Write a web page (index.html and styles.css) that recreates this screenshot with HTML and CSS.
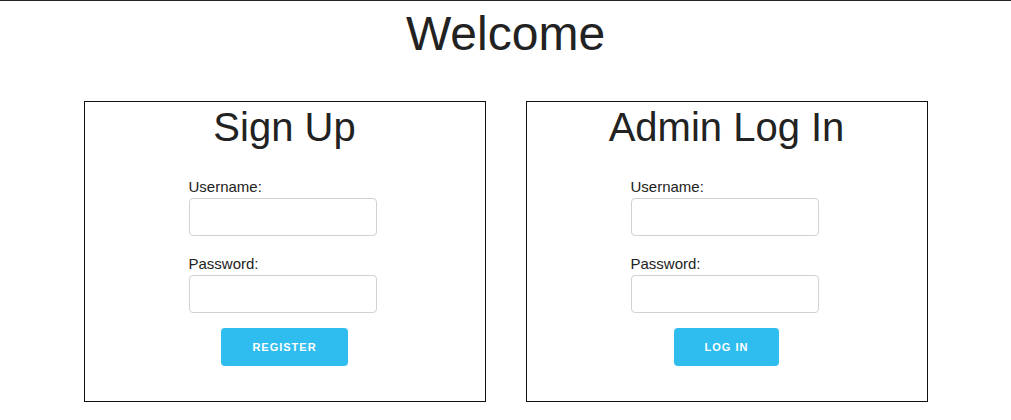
FILE: index.html
```html
<!DOCTYPE html>
<html lang="en">
<head>
<meta charset="utf-8">
<title>Welcome</title>
<link rel="stylesheet" href="styles.css">
</head>
<body>
<header class="topbar">
  <h1 class="title">Welcome</h1>
</header>
<main class="panels">
  <section class="panel">
    <h2 class="panel-title">Sign Up</h2>
    <form class="form">
      <label class="label" for="su-user">Username:</label>
      <input class="input" id="su-user" type="text">
      <label class="label" for="su-pass">Password:</label>
      <input class="input" id="su-pass" type="password">
    </form>
    <button class="btn" type="button">Register</button>
  </section>
  <section class="panel">
    <h2 class="panel-title">Admin Log In</h2>
    <form class="form">
      <label class="label" for="ad-user">Username:</label>
      <input class="input" id="ad-user" type="text">
      <label class="label" for="ad-pass">Password:</label>
      <input class="input" id="ad-pass" type="password">
    </form>
    <button class="btn" type="button">Log In</button>
  </section>
</main>
</body>
</html>
```
FILE: styles.css
```css
* { box-sizing: border-box; }

html, body {
  margin: 0;
  padding: 0;
  background: #fff;
}

body {
  font-family: "Liberation Sans", Arial, Helvetica, sans-serif;
  color: #222;
  border-top: 1px solid #222;
}

.topbar {
  padding-top: 5px;
}

.title {
  margin: 0;
  font-size: 48px;
  line-height: 55px;
  font-weight: 400;
  text-align: center;
}

.panels {
  width: 844px;
  margin: 40px auto 0;
  display: flex;
  gap: 40px;
}

.panel {
  width: 402px;
  border: 1px solid #111;
  padding: 2px 0 35px;
  display: flex;
  flex-direction: column;
  align-items: center;
}

.panel-title {
  margin: 0;
  font-size: 40px;
  line-height: 46px;
  font-weight: 400;
  text-align: center;
}

.form {
  width: 192px;
  margin: 28px 0 0;
  display: flex;
  flex-direction: column;
  align-items: flex-start;
}

.label {
  font-size: 15px;
  line-height: 18px;
  margin-bottom: 2px;
}

.input {
  width: 188px;
  height: 38px;
  margin: 0 0 19px;
  padding: 6px 10px;
  border: 1px solid #d1d1d1;
  border-radius: 4px;
  background: #fff;
  font: inherit;
  font-size: 15px;
}

.input:last-child {
  margin-bottom: 0;
}

.btn {
  margin-top: 15px;
  height: 38px;
  padding: 0 31px;
  border: 0;
  border-radius: 4px;
  background: #2fbdf0;
  color: #fff;
  font-family: "Liberation Sans", Arial, Helvetica, sans-serif;
  font-size: 11px;
  font-weight: 700;
  letter-spacing: 1px;
  text-transform: uppercase;
  line-height: 38px;
}
```
